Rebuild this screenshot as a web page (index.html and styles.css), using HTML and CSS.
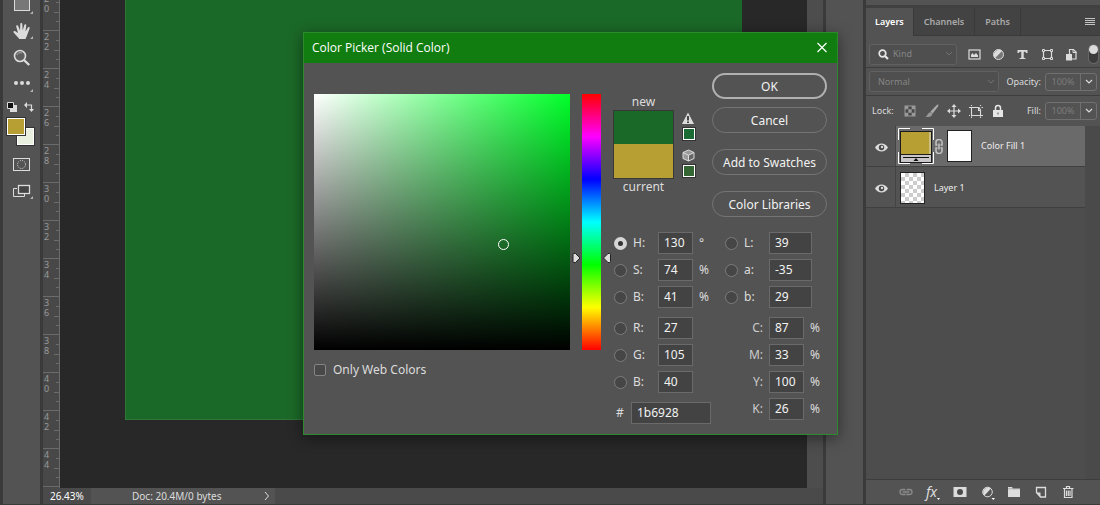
FILE: index.html
```html
<!DOCTYPE html>
<html lang="en">
<head>
<meta charset="utf-8">
<title>Color Picker</title>
<link rel="stylesheet" href="styles.css">
</head>
<body>
<div class="app">
  <nav class="toolbar" aria-label="Tools">
    <button class="tool tool-shape" aria-label="Rectangle"><svg width="22" height="16" viewBox="0 0 22 16"><rect x="3.500" y="-3" width="15" height="13.500" fill="#777" stroke="#dcdcdc"/><path d="M22 11v3h-3z" fill="#b5b5b5"/></svg></button>
    <button class="tool tool-hand" aria-label="Hand"><svg width="22" height="18" viewBox="0 0 22 18"><path d="M8 16.500 2.600 10.500c-.8-1 .6-2.200 1.700-1.300L7 11 5.200 4.500c-.3-1.400 1.500-1.900 2-.5L9 8.500 9.300 2c0-1.500 2-1.500 2 0l.4 6.500L13.300 3c.4-1.400 2.200-1 1.900.5L14.500 9.500 16.900 5.500c.7-1.200 2.200-.4 1.700.9L15.800 14l-1.300 3H8z" fill="#dcdcdc"/><path d="M22 14v3h-3z" fill="#b5b5b5"/></svg></button>
    <button class="tool tool-zoom" aria-label="Zoom"><svg width="22" height="18" viewBox="0 0 22 18"><circle cx="9" cy="7" r="5.500" fill="#5e5e5e" stroke="#dcdcdc" stroke-width="1.600"/><path d="M6 6c.5-2 2.500-3 5-2" fill="none" stroke="#aaa"/><path d="m13 11 5.200 5" stroke="#dcdcdc" stroke-width="2.400"/></svg></button>
    <button class="tool tool-more" aria-label="Edit toolbar"><svg width="22" height="14" viewBox="0 0 22 14"><g fill="#dcdcdc"><circle cx="5" cy="4" r="2"/><circle cx="11" cy="4" r="2"/><circle cx="17" cy="4" r="2"/></g><path d="M22 10v3h-3z" fill="#b5b5b5"/></svg></button>
    <div class="swap-row">
      <button aria-label="Default colors"><svg width="10" height="10" viewBox="0 0 10 10"><path d="M3 3h7v7H3z" fill="#dcdcdc"/><path d="M.5.500h6v6h-6z" fill="#111" stroke="#dcdcdc"/></svg></button>
      <button aria-label="Swap colors"><svg width="10" height="10" viewBox="0 0 10 10"><path d="M2 3h5.500v5" fill="none" stroke="#dcdcdc" stroke-width="1.200"/><path d="M0 3l3-3v6zM7.500 10 5 7h5z" fill="#dcdcdc"/></svg></button>
    </div>
    <div class="wells"><button class="well well-back" aria-label="Background color"></button><button class="well well-front" aria-label="Foreground color"></button></div>
    <button class="tool tool-mask" aria-label="Quick mask"><svg width="22" height="14" viewBox="0 0 22 14"><rect x="2.500" y=".5" width="16" height="12" fill="none" stroke="#dcdcdc"/><circle cx="10.500" cy="6.500" r="4" fill="none" stroke="#dcdcdc" stroke-dasharray="1 1.100"/></svg></button>
    <button class="tool tool-screen" aria-label="Screen mode"><svg width="22" height="16" viewBox="0 0 22 16"><path d="M6 4.500H2.500v8h11V10" fill="none" stroke="#dcdcdc"/><rect x="7.500" y="1.500" width="11" height="8" fill="#444" stroke="#dcdcdc" stroke-width="1.300"/><path d="M22 12v3h-3z" fill="#b5b5b5"/></svg></button>
  </nav>

  <main class="document">
    <div class="workspace">
      <div class="ruler">
        <div class="mark">2<br>0</div><div class="mark">2<br>2</div><div class="mark">2<br>4</div><div class="mark">2<br>6</div><div class="mark">2<br>8</div><div class="mark">3<br>0</div><div class="mark">3<br>2</div><div class="mark">3<br>4</div><div class="mark">3<br>6</div><div class="mark">3<br>8</div><div class="mark">4<br>0</div><div class="mark">4<br>2</div><div class="mark">4<br>4</div><div class="mark"></div>
      </div>
      <div class="canvas"><div class="artboard"></div></div>
      <div class="scrollbar"></div>
    </div>
    <footer class="status"><span class="zoom-level">26.43%</span><button class="doc-info"><span>Doc: 20.4M/0 bytes</span><svg width="6" height="10" viewBox="0 0 6 10"><path d="M1 1l3.500 4L1 9" fill="none" stroke="#dcdcdc"/></svg></button></footer>
  </main>

  <div class="dock"></div>

  <aside class="panel">
    <div class="panel-cap"></div>
    <div class="tabs">
      <button class="tab tab-active">Layers</button><button class="tab">Channels</button><button class="tab">Paths</button>
      <button class="menu" aria-label="Panel menu"><svg width="10" height="8" viewBox="0 0 10 8"><path d="M0 .5h10M0 2.500h10M0 4.500h10M0 6.500h10" stroke="#c4c4c4"/></svg></button>
    </div>
    <div class="row filters">
      <div class="picker picker-kind">
        <svg class="lens" width="11" height="11" viewBox="0 0 11 11"><circle cx="4.500" cy="4.500" r="3.300" fill="none" stroke="#e6e6e6" stroke-width="1.700"/><path d="m7 7 3 3" stroke="#e6e6e6" stroke-width="2.200"/></svg>
        <select aria-label="Filter kind"><option>Kind</option></select>
        <svg class="chevron" width="8" height="6" viewBox="0 0 8 6"><path d="M1 1l3 3 3-3" fill="none" stroke="#727272"/></svg>
      </div>
      <div class="filter-icons">
        <button aria-label="Pixel layers"><svg width="13" height="13" viewBox="0 0 13 13"><rect x="1" y="2" width="11" height="9" fill="none" stroke="#dcdcdc" stroke-width="1.200"/><path d="M3 9V7l1.500-2L6 7l2-2 2 2.500V9z" fill="#dcdcdc"/></svg></button>
        <button aria-label="Adjustment layers"><svg width="13" height="13" viewBox="0 0 13 13"><circle cx="6.500" cy="6.500" r="5" fill="#777" stroke="#dcdcdc"/><path d="M3 10 10 3A5 5 0 0 0 3 10z" fill="#dcdcdc"/></svg></button>
        <button aria-label="Type layers"><svg width="13" height="13" viewBox="0 0 13 13"><path d="M1.500 2h10v3H10l-.5-1.300H7.700v6l1.800.5V11H3.500v-.8l1.800-.5v-6H3.500L3 5H1.500z" fill="#dcdcdc"/></svg></button>
        <button aria-label="Shape layers"><svg width="13" height="13" viewBox="0 0 13 13"><path d="M2.500 2.500h8v8h-8z" fill="none" stroke="#dcdcdc" stroke-width="1.200"/><g fill="#555" stroke="#dcdcdc"><path d="M1.500 1.500h2v2h-2zM9.500 1.500h2v2h-2zM1.500 9.500h2v2h-2zM9.500 9.500h2v2h-2z"/></g></svg></button>
        <button aria-label="Smart objects"><svg width="13" height="13" viewBox="0 0 13 13"><path d="M4.500 6V1.500h4l2.500 2.500v7H7" fill="none" stroke="#dcdcdc" stroke-width="1.200"/><path d="M8 1v3.500h3.500" fill="none" stroke="#dcdcdc"/><path d="M1 6h6v6.500H1z" fill="#dcdcdc"/></svg></button>
        <button class="switch" aria-label="Filter toggle"><span></span></button>
      </div>
    </div>
    <div class="row blend">
      <div class="picker picker-mode">
        <select aria-label="Blend mode"><option>Normal</option></select>
        <svg class="chevron" width="8" height="6" viewBox="0 0 8 6"><path d="M1 1l3 3 3-3" fill="none" stroke="#727272"/></svg>
      </div>
      <label class="amount"><span>Opacity:</span><span class="combo"><input type="text" value="100%"><button aria-label="Opacity slider"><svg width="8" height="6" viewBox="0 0 8 6"><path d="M1 1l3 3 3-3" fill="none" stroke="#dcdcdc" stroke-width="1.200"/></svg></button></span></label>
    </div>
    <div class="row locks">
      <span class="lock-label">Lock:</span>
      <div class="lock-icons">
        <button aria-label="Lock transparency"><svg width="14" height="14" viewBox="0 0 14 14"><rect x="2" y="2" width="10" height="10" fill="#484848" stroke="#999"/><path d="M2 2h3.300v3.300H2zM8.700 2H12v3.300H8.700zM5.300 5.300h3.400v3.400H5.300zM2 8.700h3.300V12H2zM8.700 8.700H12V12H8.700z" fill="#999"/></svg></button>
        <button aria-label="Lock pixels"><svg width="14" height="14" viewBox="0 0 14 14"><path d="M13.500.5 12 .8 5.500 7.500l2 2.200L13 2.500z" fill="#aaa"/><path d="M5.300 8.300c2 .3 2.400 2.200 1.200 3.400-1.500 1.500-4 1.500-6 1.300 2-.8 2-4 4.800-4.700z" fill="#999"/></svg></button>
        <button aria-label="Lock position"><svg width="14" height="14" viewBox="0 0 14 14"><path d="M7 2v10M2 7h10" stroke="#dcdcdc" stroke-width="1.200"/><path d="M7 0l2.500 3h-5zM7 14l2.500-3h-5zM0 7l3-2.500v5zM14 7l-3-2.500v5z" fill="#dcdcdc"/></svg></button>
        <button aria-label="Lock artboard"><svg width="14" height="14" viewBox="0 0 14 14"><path d="M0 3.500h10L11.500 6v5.500M14 11.500H2.500V3.500M2.500 1v1M11.500 1v1M12.500 3.500H14M0 11.500h1M2.500 12.500V14M11.500 12.500V14M9.500 3.500v3h2" fill="none" stroke="#dcdcdc" stroke-width="1.100"/></svg></button>
        <button aria-label="Lock all"><svg width="14" height="14" viewBox="0 0 14 14"><path d="M4.500 7V4a2.500 2.500 0 0 1 5 0v3" fill="none" stroke="#e6e6e6" stroke-width="1.500"/><path d="M2 6h10v7H2z" fill="#e6e6e6"/><path d="M6.500 8.500h1v2h-1z" fill="#555"/></svg></button>
      </div>
      <label class="amount"><span>Fill:</span><span class="combo"><input type="text" value="100%"><button aria-label="Fill slider"><svg width="8" height="6" viewBox="0 0 8 6"><path d="M1 1l3 3 3-3" fill="none" stroke="#dcdcdc" stroke-width="1.200"/></svg></button></span></label>
    </div>
    <div class="layers">
      <ul class="layer-list">
        <li class="layer layer-selected">
          <button class="eye" aria-label="Visibility"><svg width="13" height="9" viewBox="0 0 13 9"><path d="M0 4.500C3-.8 10-.8 13 4.500 10 9.800 3 9.800 0 4.500z" fill="#dcdcdc"/><circle cx="6.500" cy="4.500" r="2.700" fill="#484848"/><circle cx="7" cy="4" r="1.200" fill="#dcdcdc"/></svg></button>
          <div class="layer-main">
            <svg width="36" height="36" viewBox="0 0 36 36"><path d="M.5 12V.500H12M24 .5h11.500V12M35.500 24v11.500H24M12 35.500H.500V24" fill="none" stroke="#fff"/><rect x="2.500" y="3.500" width="31" height="31" fill="#c9c6c9" stroke="#1c1c1c"/><path d="M3 4h30v22H3z" fill="#b89f33"/><path d="M32 4v22" stroke="#ddd"/><path d="M3 26.500h30" stroke="#1c1c1c"/><path d="M5 29.500h26" stroke="#111"/><path d="M15.500 33l2.500-3 2.500 3z" fill="#111"/></svg>
            <svg class="chain" width="8" height="15" viewBox="0 0 8 15"><path d="M2.500 6H1V3a3 2.500 0 0 1 6 0v3H5.500M2.500 9H1v3a3 2.500 0 0 0 6 0V9H5.500M4 4.500v6" fill="none" stroke="#c4c4c4" stroke-width="1.500"/></svg>
            <div class="mask-thumb"></div>
            <span class="layer-name">Color Fill 1</span>
          </div>
        </li>
        <li class="layer">
          <button class="eye" aria-label="Visibility"><svg width="13" height="9" viewBox="0 0 13 9"><path d="M0 4.500C3-.8 10-.8 13 4.500 10 9.800 3 9.800 0 4.500z" fill="#dcdcdc"/><circle cx="6.500" cy="4.500" r="2.700" fill="#484848"/><circle cx="7" cy="4" r="1.200" fill="#dcdcdc"/></svg></button>
          <div class="layer-main"><div class="mask-thumb checker"></div><span class="layer-name">Layer 1</span></div>
        </li>
      </ul>
      <div class="list-scroll"></div>
    </div>
    <div class="actions">
      <button aria-label="Link layers"><svg width="16" height="14" viewBox="0 0 16 14"><path d="M7 4.500H4.500a2.500 2.500 0 0 0 0 5H7V8.500M7 4.500v1M9 4.500h2.500a2.500 2.500 0 0 1 0 5H9V8.500M9 4.500v1M4.500 7h7" fill="none" stroke="#8a8a8a" stroke-width="1.300"/></svg></button>
      <button class="fx" aria-label="Layer style"><i>fx</i><svg width="3" height="2" viewBox="0 0 3 2"><path d="M0 0h3L1.500 2z" fill="#fff"/></svg></button>
      <button aria-label="Add mask"><svg width="16" height="14" viewBox="0 0 16 14"><path d="M1.500 2h13v10h-13z" fill="#dcdcdc"/><circle cx="8" cy="7" r="3" fill="#4a4a4a"/></svg></button>
      <button aria-label="New adjustment"><svg width="16" height="16" viewBox="0 0 16 16"><circle cx="8.500" cy="8" r="4.800" fill="#555" stroke="#dcdcdc"/><path d="M5.500 11.500l6.500-7a4.800 4.800 0 0 0-6.500 7z" fill="#dcdcdc"/><path d="M12.500 14h3.500l-1.700 2z" fill="#fff"/></svg></button>
      <button aria-label="New group"><svg width="16" height="14" viewBox="0 0 16 14"><path d="M2 2h4l1 1.500h7V12H2z" fill="#dcdcdc"/><path d="M2 3.800h12" stroke="#888" stroke-width=".6"/></svg></button>
      <button aria-label="New layer"><svg width="16" height="14" viewBox="0 0 16 14"><path d="M3.500 7.500V2.500h9v9.500H7.500z" fill="none" stroke="#dcdcdc" stroke-width="1.300"/><path d="M3 7.500h4.500V12z" fill="#dcdcdc"/></svg></button>
      <button aria-label="Delete layer"><svg width="16" height="14" viewBox="0 0 16 14"><path d="M3 3.500h10.500M6.500 3V1.500h3V3M4.500 4v8.500h7.500V4M6.500 5.500v5.500M8.300 5.500v5.500M10 5.500v5.500" fill="none" stroke="#dcdcdc" stroke-width="1.200"/></svg></button>
    </div>
  </aside>
</div>

<section class="dialog" role="dialog" aria-label="Color Picker">
  <header class="titlebar"><h1>Color Picker (Solid Color)</h1><button aria-label="Close"><svg width="12" height="12" viewBox="0 0 12 12"><path d="M1.500 1l9 9M10.500 1l-9 9" stroke="#fff" stroke-width="1.200"/></svg></button></header>
  <form class="dialog-body">
    <div class="field-column">
      <div class="color-field"><span class="cursor"></span></div>
      <label class="web-only"><input type="checkbox">Only Web Colors</label>
    </div>
    <div class="hue-bar">
      <svg class="pointer pointer-left" width="10" height="10" viewBox="0 0 10 10"><path d="M1 1.500Q1 .5 2 .5h1.500L8 5 3.500 9.500H2Q1 9.500 1 8.500z" fill="#dcdcdc" stroke="#222"/></svg>
      <svg class="pointer pointer-right" width="10" height="10" viewBox="0 0 10 10"><path d="M9.500 1.500q0-1-1-1H7L2.500 5 7 9.500h1.500q1 0 1-1z" fill="#dcdcdc" stroke="#222"/></svg>
    </div>
    <div class="settings">
      <div class="top">
        <div class="compare"><span>new</span><div class="swatch"><div class="swatch-new"></div><div class="swatch-current"></div></div><span>current</span></div>
        <div class="warnings">
          <svg width="13" height="13" viewBox="0 0 13 13"><path d="M6 .5 12 12H0z" fill="#dcdcdc"/><path d="M5 4h2v4.500H5zM5 9.500h2v1.600H5z" fill="#444"/></svg>
          <button type="button" class="chip chip-gamut" aria-label="Use printable color"></button>
          <svg class="cube" width="13" height="13" viewBox="0 0 13 13"><path d="M6.500 1 12 3.500v6L6.500 12 1 9.500v-6z" fill="#999"/><path d="M6.500 6.500 12 4v5.500L6.500 12z" fill="#666"/><path d="M6.500 1 12 3.500v6L6.500 12 1 9.500v-6zM1 3.500l5.500 2.700L12 3.500M6.500 6.200V12" fill="none" stroke="#dcdcdc"/></svg>
          <button type="button" class="chip chip-web" aria-label="Use web color"></button>
        </div>
        <div class="buttons"><div class="button-pair"><button type="button" class="pill pill-main">OK</button><button type="button" class="pill">Cancel</button></div><button type="button" class="pill">Add to Swatches</button><button type="button" class="pill">Color Libraries</button></div>
      </div>
      <div class="numbers">
        <div class="stack">
          <div class="group">
            <div class="value"><input type="radio" name="axis" id="ax-h" checked><label for="ax-h">H:</label><input type="text" aria-label="Hue" value="130"><span>°</span></div>
            <div class="value"><input type="radio" name="axis" id="ax-s"><label for="ax-s">S:</label><input type="text" aria-label="Saturation" value="74"><span>%</span></div>
            <div class="value"><input type="radio" name="axis" id="ax-v"><label for="ax-v">B:</label><input type="text" aria-label="Brightness" value="41"><span>%</span></div>
          </div>
          <div class="group">
            <div class="value"><input type="radio" name="axis" id="ax-r"><label for="ax-r">R:</label><input type="text" aria-label="Red" value="27"></div>
            <div class="value"><input type="radio" name="axis" id="ax-g"><label for="ax-g">G:</label><input type="text" aria-label="Green" value="105"></div>
            <div class="value"><input type="radio" name="axis" id="ax-b"><label for="ax-b">B:</label><input type="text" aria-label="Blue" value="40"></div>
          </div>
          <label class="hex"><span>#</span><input type="text" value="1b6928"></label>
        </div>
        <div class="stack">
          <div class="group">
            <div class="value value-lab"><input type="radio" name="axis" id="ax-l"><label for="ax-l">L:</label><input type="text" aria-label="Lightness" value="39"></div>
            <div class="value value-lab"><input type="radio" name="axis" id="ax-la"><label for="ax-la">a:</label><input type="text" aria-label="a" value="-35"></div>
            <div class="value value-lab"><input type="radio" name="axis" id="ax-lb"><label for="ax-lb">b:</label><input type="text" aria-label="b" value="29"></div>
          </div>
          <div class="group">
            <div class="value value-ink"><label for="ink-c">C:</label><input type="text" id="ink-c" value="87"><span>%</span></div>
            <div class="value value-ink"><label for="ink-m">M:</label><input type="text" id="ink-m" value="33"><span>%</span></div>
            <div class="value value-ink"><label for="ink-y">Y:</label><input type="text" id="ink-y" value="100"><span>%</span></div>
            <div class="value value-ink"><label for="ink-k">K:</label><input type="text" id="ink-k" value="26"><span>%</span></div>
          </div>
        </div>
      </div>
    </div>
  </form>
</section>
</body>
</html>
```
FILE: styles.css
```css
* { box-sizing: border-box; }
body { margin: 0; background: #3a3a3a; color: #dcdcdc; font: 10px/14px "Noto Sans", "Open Sans", sans-serif; overflow: hidden; }
button, input, select { margin: 0; padding: 0; border: 0; background: none; color: inherit; font: inherit; }
button { display: flex; align-items: center; justify-content: center; }
svg { display: block; flex: none; }
select { appearance: none; }

.app { display: grid; grid-template-columns: 38px minmax(0, 1fr) 37px 234px; column-gap: 3px; height: 100vh; padding: 0 0 1px 2px; background: #3a3a3a; }

/* Toolbar */
.toolbar { display: flex; flex-direction: column; align-items: flex-start; background: #535353; border-left: 1px solid #3a3a3a; padding-left: 8px; overflow: hidden; }
.tool-hand { margin-top: 6px; }
.tool-zoom { margin-top: 9px; }
.tool-more { margin-top: 12px; }
.swap-row { display: flex; gap: 7px; margin: 9px 0 0 -4px; }
.wells { display: grid; grid-template-columns: 10px 10px 9px; grid-template-rows: 10px 9px 10px; margin: 5px 0 0 -5px; }
.well { border: 1px solid #333; box-shadow: inset 0 0 0 1px #fff; }
.well-front { grid-area: 1 / 1 / 3 / 3; background: #b89f33; }
.well-back { grid-area: 2 / 2 / 4 / 4; background: #e9efdf; }
.tool-mask { margin-top: 12px; }
.tool-screen { margin-top: 12px; }

/* Document window */
.document { display: flex; flex-direction: column; min-width: 0; min-height: 0; background: #4a4a4a; }
.workspace { display: flex; flex: 1; min-height: 0; overflow: hidden; }
.ruler { width: 17px; flex: none; margin-top: -8px; border-right: 1px solid #6b6b6b; background: #484848; color: #9a9a9a; font-size: 9px; line-height: 10px; }
.mark { height: 38px; padding: 1px 0 0 1px; border-top: 1px solid #6b6b6b; background: linear-gradient(#6b6b6b, #6b6b6b) right 9px / 3px 1px no-repeat, linear-gradient(#6b6b6b, #6b6b6b) right 19px / 5px 1px no-repeat, linear-gradient(#6b6b6b, #6b6b6b) right 28px / 3px 1px no-repeat; background-position: right 0 top 9px, right 0 top 19px, right 0 top 28px; }
.canvas { flex: 1; display: flex; padding: 0 65px 68px; background: #282828; }
.artboard { flex: 1; border: solid #2f7438; border-width: 0 0 1px 1px; background: #1b6928; }
.scrollbar { width: 16px; background: #4d4d4d; }
.status { display: flex; height: 16px; }
.zoom-level { width: 48px; padding-left: 7px; color: #fff; line-height: 16px; }
.doc-info { width: 184px; justify-content: space-between; padding: 0 5px 0 41px; background: #535353; }
.dock { background: #535353; }

/* Layers panel */
.panel { display: flex; flex-direction: column; min-width: 0; min-height: 0; background: #535353; font-size: 9px; }
.panel-cap { height: 8px; border-bottom: 3px solid #404040; }
.tabs { display: flex; height: 28px; background: #434343; border-bottom: 1px solid #3a3a3a; }
.tab { padding: 0 10px; border-right: 1px solid #393939; color: #aaa; font-weight: 600; }
.tab-active { padding: 0 9px; margin-bottom: -1px; background: #535353; color: #fff; }
.menu { margin: 0 5px 0 auto; }
.row { display: flex; align-items: center; height: 28px; border-bottom: 1px solid #3d3d3d; padding: 0 3px; }
.filters { height: 32px; padding: 5px 2px 0 3px; }
.picker { display: flex; align-items: center; height: 21px; border: 1px solid #616161; border-radius: 3px; color: #858585; background: #4f4f4f; }
.picker select { flex: 1; height: 19px; }
.picker-kind { width: 88px; padding: 0 3px 0 8px; gap: 4px; }
.picker-mode { width: 130px; padding: 0 3px 0 8px; }
.filter-icons { display: flex; flex: 1; justify-content: space-between; align-items: center; padding-left: 11px; }
.switch { width: 9px; height: 18px; border-radius: 5px; background: #3b3b3b; align-items: flex-start; box-shadow: 0 0 0 1px #666; }
.switch span { width: 9px; height: 9px; flex: none; border-radius: 5px; background: #dcdcdc; }
.amount { display: flex; align-items: center; gap: 4px; margin-left: auto; }
.combo { display: flex; width: 52px; height: 18px; border: 1px solid #707070; border-radius: 3px; }
.combo input { width: 35px; border-right: 1px solid #707070; text-align: center; color: #7c7c7c; }
.combo button { flex: 1; }
.locks { border-bottom: 0; height: 30px; }
.lock-label { width: 34px; padding-left: 3px; }
.lock-icons { display: flex; gap: 8px; }
.layers { display: flex; flex: 1; min-height: 0; background: #4d4d4d; }
.layer-list { flex: 1; margin: 0; padding: 0; list-style: none; }
.layer { display: flex; height: 41px; border-bottom: 1px solid #404040; background: #535353; }
.eye { width: 30px; padding: 2px 0 0 1px; border-right: 1px solid #444; }
.layer-main { display: flex; flex: 1; align-items: center; padding: 2px 0 0 4px; }
.layer-selected .layer-main { padding: 0 0 0 2px; background: #6a6a6a; }
.chain { margin: 0 4px 0 1px; }
.mask-thumb { width: 25px; height: 32px; border: 1px solid #222; background: #fff; }
.checker { background: repeating-conic-gradient(#ccc 0 25%, #fff 0 50%) 0 0 / 8px 8px; }
.layer-name { margin-left: 9px; color: #eee; }
.list-scroll { width: 15px; background: #4a4a4a; }
.actions { display: flex; height: 25px; border-top: 1px solid #3d3d3d; padding: 0 24px 0 32px; justify-content: space-between; }
.fx { width: 16px; align-items: center; font: 14px/16px "Noto Sans", sans-serif; }
.fx svg { align-self: flex-end; margin-bottom: 4px; }

/* Color picker dialog */
.dialog { position: absolute; left: 303px; top: 32px; width: 535px; border: 1px solid #2b8a2b; background: #535353; box-shadow: 0 3px 14px rgba(0, 0, 0, .45); font-size: 12px; line-height: 16px; }
.titlebar { display: flex; align-items: center; justify-content: space-between; height: 30px; padding: 0 9px 0 8px; background: #117c0f; color: #fff; }
.titlebar h1 { margin: 0; font: 12px/16px "Open Sans", "Noto Sans", sans-serif; }
.dialog-body { display: grid; grid-template-columns: 256px 19px minmax(0, 1fr); gap: 12px; padding: 10px; }
.field-column { padding-top: 21px; }
.color-field { height: 256px; padding: 145px 0 0 184px; background: linear-gradient(to top, #000, transparent), linear-gradient(to right, #fff, #00ff2a); }
.cursor { display: block; width: 11px; height: 11px; border: 1px solid #fff; border-radius: 50%; }
.web-only { display: flex; align-items: center; gap: 7px; margin-top: 12px; }
.web-only input { appearance: none; width: 12px; height: 12px; border: 1px solid #858585; border-radius: 2px; background: #484848; }
.hue-bar { position: relative; height: 256px; margin-top: 21px; background: linear-gradient(#f00, #f0f, #00f, #0ff, #0f0, #ff0, #f00); }
.pointer { position: absolute; top: 62%; }
.pointer-left { right: 100%; }
.pointer-right { left: 100%; }
.top { display: flex; }
.compare { width: 61px; padding-top: 21px; text-align: center; }
.compare span { display: block; }
.swatch { border: 1px solid #383838; }
.swatch-new { height: 33px; background: #1b6928; }
.swatch-current { height: 34px; background: #b89f33; }
.warnings { width: 14px; margin-left: 8px; padding-top: 39px; }
.chip { width: 14px; height: 14px; margin-top: 2px; border: 1px solid #333; box-shadow: inset 0 0 0 1px #fff; }
.chip-gamut { background: #1a6b34; }
.chip-web { background: #336633; }
.cube { margin-top: 8px; }
.buttons { display: flex; flex-direction: column; gap: 16px; width: 115px; margin-left: auto; }
.button-pair { display: grid; gap: 8px; }
.pill { width: 100%; height: 26px; padding-top: 1px; border: 1px solid #747474; border-radius: 13px; color: #f2f2f2; }
.pill-main { border: 2px solid #b0b0b0; }
.numbers { display: flex; gap: 14px; margin-top: 15px; }
.stack { display: flex; flex-direction: column; gap: 9px; width: 98px; }
.group { display: grid; gap: 5px; }
.value { display: grid; grid-template-columns: 13px 19px 35px auto; align-items: center; gap: 6px; padding-left: 1px; }
.value-lab { grid-template-columns: 13px 19px 43px; padding-left: 0; }
.value-ink { grid-template-columns: 38px 35px auto; padding-left: 0; }
.value-ink label { text-align: right; color: #ccc; }
.value input[type="text"], .hex input { width: 100%; height: 22px; padding: 0 0 1px 5px; border: 1px solid #6a6a6a; background: #434343; color: #f2f2f2; }
.value input[type="radio"] { appearance: none; width: 13px; height: 13px; border: 1px solid #7c7c7c; border-radius: 50%; background: #464646; }
.value input[type="radio"]:checked { border: 4px solid #d6d6d6; background: #333; }
.hex { display: grid; grid-template-columns: 12px 80px; gap: 3px; padding-left: 3px; align-items: center; }
```
